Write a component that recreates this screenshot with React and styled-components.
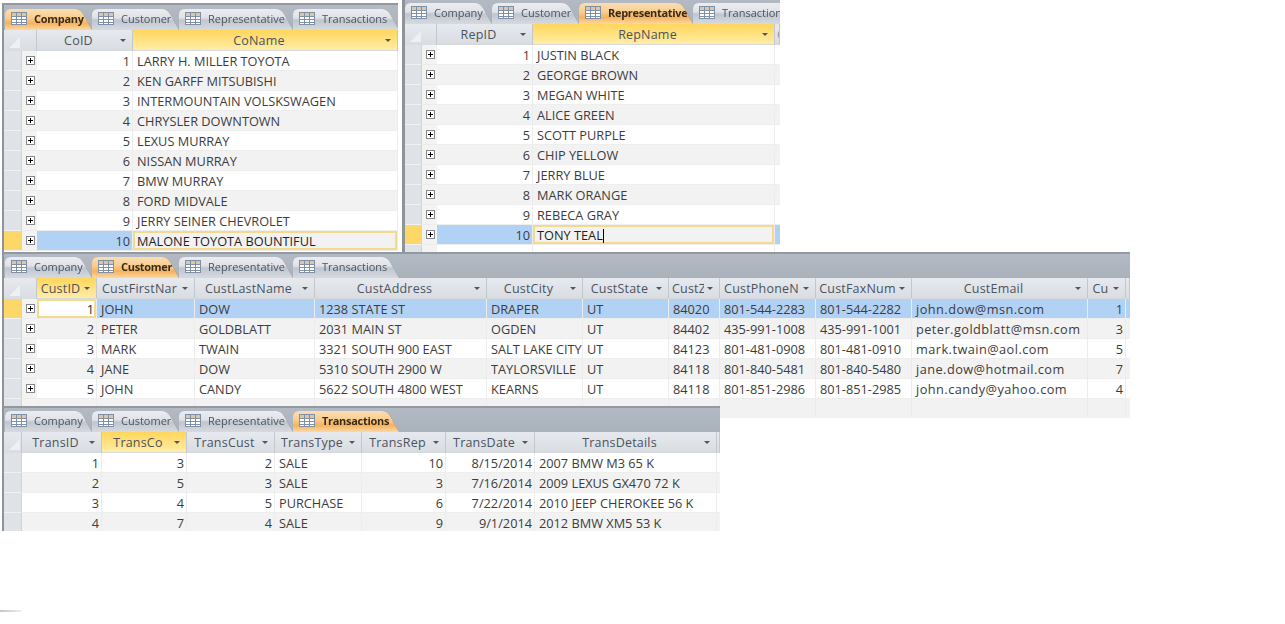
import React from "react";
import styled, { createGlobalStyle } from "styled-components";

const GlobalStyle = createGlobalStyle`
  html, body {
    margin: 0;
    padding: 0;
    background: #fff;
  }
  body {
    font-family: "Open Sans", "Liberation Sans", sans-serif;
  }
`;

const Page = styled.div`
  width: 1285px;
  height: 624px;
  overflow: hidden;
`;

const TopRow = styled.div`
  display: flex;
  align-items: flex-start;
  margin-left: 2px;
  gap: 4px;
`;

const Window = styled.section`
  position: relative;
  box-sizing: border-box;
  flex: none;
  width: ${p => p.$width}px;
  height: ${p => p.$height}px;
  margin-left: ${p => p.$left || 0}px;
  margin-top: ${p => p.$overlap || 0}px;
  padding-top: ${p => p.$gap || 0}px;
  overflow: hidden;
  background: #fff;
`;

const Frame = styled.div`
  box-sizing: border-box;
  height: 100%;
  border-left: ${p => p.$border || 2}px solid #8f949b;
  border-top: ${p => (p.$noTop ? "0" : "2px solid #94989f")};
`;

const TabStrip = styled.div`
  display: flex;
  align-items: flex-end;
  box-sizing: border-box;
  height: ${p => p.$height || 24}px;
  padding-left: ${p => p.$inset}px;
  background: linear-gradient(#b3bac4, #a9b1bb);
`;

const TabOutline = styled.div`
  flex: none;
  position: relative;
  z-index: ${p => (p.$active ? 2 : 1)};
  width: ${p => p.$width}px;
  margin-right: -1px;
  filter: drop-shadow(0 0 0.6px #6f7883);
`;

const TabShape = styled.div`
  display: flex;
  align-items: center;
  box-sizing: border-box;
  height: 22px;
  padding: 0 0 2px 6px;
  gap: 7px;
  font-size: 11px;
  white-space: nowrap;
  font-weight: ${p => (p.$active ? 700 : 400)};
  letter-spacing: ${p => (p.$active ? "-0.3px" : "0")};
  color: ${p => (p.$active ? "#3a2a14" : "#4c5560")};
  background: ${p =>
    p.$active
      ? "linear-gradient(#fbe0b8, #f9cd8e 45%, #f6b25e 70%, #fbd9a5)"
      : "linear-gradient(#eceef1, #dfe2e7 45%, #c0c6ce 55%, #d6dae0)"};
  clip-path: ${p => {
    const w = p.$width;
    return `path("M0 22 L0 6 Q0 1 6 1 L${w - 18} 1 Q${w - 13} 1 ${w - 10} 6 L${w - 1} 22 Z")`;
  }};
`;

const GridRow = styled.div`
  display: grid;
  grid-template-columns: ${p => p.$cols};
  height: ${p => p.$height || 20}px;
  background: ${p => (p.$alt ? "#f2f2f2" : "#fff")};
`;

const HeaderCell = styled.div`
  display: flex;
  align-items: center;
  min-width: 0;
  overflow: hidden;
  box-sizing: border-box;
  border-right: 1px solid #c3c8cf;
  border-bottom: 1px solid #d6d9de;
  font-size: 12.5px;
  letter-spacing: 0.2px;
  color: #4a535e;
  background: ${p =>
    p.$active
      ? "linear-gradient(#ffd65c, #ffe68f 70%, #ffeda8)"
      : "linear-gradient(#e6e9ed, #d9dde2)"};
`;

const HeaderLabel = styled.span`
  flex: 1;
  min-width: 0;
  padding-left: 3px;
  overflow: hidden;
  white-space: nowrap;
  text-align: center;
`;

const TailLabel = styled.span`
  padding-left: 2px;
  color: #8d949d;
`;

const SortArrow = styled.span`
  flex: none;
  width: 0;
  height: 0;
  margin: 1px 6px 0 3px;
  border-left: 3px solid transparent;
  border-right: 3px solid transparent;
  border-top: 3px solid #4f5761;
`;

const Corner = styled.div`
  grid-column: span ${p => p.$span};
  display: flex;
  align-items: flex-end;
  padding: 0 0 3px 5px;
  border-right: 1px solid #c3c8cf;
  background: linear-gradient(#e6e9ed, #d9dde2);
`;

const Selector = styled.div`
  box-sizing: border-box;
  border-bottom: 1px solid #f0f1f3;
  border-right: 1px solid #d0d4d9;
  background: ${p => (p.$current ? "#fdd868" : "#dfe3e8")};
`;

const ExpandCell = styled.div`
  display: flex;
  align-items: center;
  justify-content: center;
  padding-left: 1px;
  border-bottom: 1px solid #ececec;
  background: #f3f3f1;
`;

const Cell = styled.div`
  box-sizing: border-box;
  min-width: 0;
  padding: 0 ${p => (p.$right ? 2 : 3)}px 0 4px;
  overflow: hidden;
  white-space: nowrap;
  font-size: 12.75px;
  line-height: 21px;
  letter-spacing: ${p => p.$spacing || 0}px;
  text-align: ${p => (p.$right ? "right" : "left")};
  color: ${p => (p.$focus ? "#1f1f1f" : "#3c3c3c")};
  border-right: 1px solid #ececec;
  border-bottom: 1px solid #eeeeee;
  background: ${p => (p.$selected ? "#b2d2f5" : "transparent")};
  box-shadow: ${p => (p.$focus ? "inset 0 0 0 2px #f3da8c" : "none")};
`;

const Caret = styled.span`
  display: inline-block;
  width: 1px;
  height: 14px;
  vertical-align: -3px;
  background: #000;
`;

const StrayMark = styled.div`
  width: 22px;
  height: 2px;
  margin-top: 79px;
  background: linear-gradient(90deg, #c4c4c4, #f1f1f1);
`;

const TableIcon = () => (
  <svg width="16" height="13" viewBox="0 0 16 13">
    <rect x="0.5" y="0.5" width="15" height="12" fill="#fff" stroke="#7f8fa8" />
    <rect x="1" y="1" width="14" height="3" fill="#d9c8a6" />
    <path d="M0 4.5H16M0 7.5H16M0 10.5H16M5.5 0V13M10.5 0V13" stroke="#7f8fa8" fill="none" />
  </svg>
);

const PlusBox = () => (
  <svg width="9" height="9" viewBox="0 0 9 9">
    <rect x="0.5" y="0.5" width="8" height="8" fill="#fff" stroke="#85898f" />
    <path d="M2 4.5H7M4.5 2V7" stroke="#000" fill="none" />
  </svg>
);

const CornerMark = () => (
  <svg width="11" height="11" viewBox="0 0 11 11">
    <path d="M0 11L11 0V11Z" fill="#eef0f3" />
  </svg>
);

const TABS = [
  { name: "Company", width: 88 },
  { name: "Customer", width: 88 },
  { name: "Representative", width: 115 },
  { name: "Transactions", width: 107 }
];

const Tabs = ({ active, height, inset = 1 }) => (
  <TabStrip $height={height} $inset={inset}>
    {TABS.map(tab => (
      <TabOutline key={tab.name} $width={tab.width} $active={tab.name === active}>
        <TabShape $width={tab.width} $active={tab.name === active}>
          <TableIcon />
          {tab.name}
        </TabShape>
      </TabOutline>
    ))}
  </TabStrip>
);

const Datasheet = ({
  columns,
  rows,
  expander,
  current,
  focusCol,
  blankRows = 0,
  caret,
  selectorWidth = 18,
  tail
}) => {
  const leading = expander ? `${selectorWidth}px 15px` : `${selectorWidth}px`;
  const cols = `${leading} ${columns.map(c => `${c.width}px`).join(" ")} 1fr`;

  return (
    <>
      <GridRow $cols={cols} $height={21}>
        <Corner $span={expander ? 2 : 1}>
          <CornerMark />
        </Corner>
        {columns.map((c, i) => (
          <HeaderCell key={c.title} $active={i === focusCol}>
            <HeaderLabel>{c.title}</HeaderLabel>
            <SortArrow />
          </HeaderCell>
        ))}
        <HeaderCell>{tail && <TailLabel>{tail}</TailLabel>}</HeaderCell>
      </GridRow>
      {rows.map((row, r) => {
        const selected = r === current;
        return (
          <GridRow key={r} $cols={cols} $alt={r % 2 === 1}>
            <Selector $current={selected} />
            {expander && (
              <ExpandCell>
                <PlusBox />
              </ExpandCell>
            )}
            {row.map((value, c) => {
              const focus = selected && c === focusCol;
              return (
                <Cell
                  key={c}
                  $right={columns[c].right}
                  $spacing={columns[c].spacing}
                  $focus={focus}
                  $selected={selected && !focus}
                >
                  {value}
                  {focus && caret && <Caret />}
                </Cell>
              );
            })}
            <Cell $selected={selected} />
          </GridRow>
        );
      })}
      {Array.from({ length: blankRows }, (_, i) => (
        <GridRow key={i} $cols={cols} $alt={(rows.length + i) % 2 === 1}>
          <Selector />
          {expander && <ExpandCell />}
          {columns.map(c => (
            <Cell key={c.title} />
          ))}
          <Cell />
        </GridRow>
      ))}
    </>
  );
};

const companyColumns = [
  { title: "CoID", width: 96, right: true },
  { title: "CoName", width: 265 }
];

const companyRows = [
  [1, "LARRY H. MILLER TOYOTA"],
  [2, "KEN GARFF MITSUBISHI"],
  [3, "INTERMOUNTAIN VOLSKSWAGEN"],
  [4, "CHRYSLER DOWNTOWN"],
  [5, "LEXUS MURRAY"],
  [6, "NISSAN MURRAY"],
  [7, "BMW MURRAY"],
  [8, "FORD MIDVALE"],
  [9, "JERRY SEINER CHEVROLET"],
  [10, "MALONE TOYOTA BOUNTIFUL"]
];

const repColumns = [
  { title: "RepID", width: 96, right: true },
  { title: "RepName", width: 242 }
];

const repRows = [
  [1, "JUSTIN BLACK"],
  [2, "GEORGE BROWN"],
  [3, "MEGAN WHITE"],
  [4, "ALICE GREEN"],
  [5, "SCOTT PURPLE"],
  [6, "CHIP YELLOW"],
  [7, "JERRY BLUE"],
  [8, "MARK ORANGE"],
  [9, "REBECA GRAY"],
  [10, "TONY TEAL"]
];

const customerColumns = [
  { title: "CustID", width: 60, right: true },
  { title: "CustFirstNar", width: 98 },
  { title: "CustLastName", width: 120 },
  { title: "CustAddress", width: 172 },
  { title: "CustCity", width: 96 },
  { title: "CustState", width: 86 },
  { title: "CustZ", width: 51 },
  { title: "CustPhoneN", width: 96 },
  { title: "CustFaxNum", width: 96 },
  { title: "CustEmail", width: 176, spacing: 0.45 },
  { title: "Cu", width: 38, right: true }
];

const customerRows = [
  [1, "JOHN", "DOW", "1238 STATE ST", "DRAPER", "UT", "84020", "801-544-2283", "801-544-2282", "john.dow@msn.com", 1],
  [2, "PETER", "GOLDBLATT", "2031 MAIN ST", "OGDEN", "UT", "84402", "435-991-1008", "435-991-1001", "peter.goldblatt@msn.com", 3],
  [3, "MARK", "TWAIN", "3321 SOUTH 900 EAST", "SALT LAKE CITY", "UT", "84123", "801-481-0908", "801-481-0910", "mark.twain@aol.com", 5],
  [4, "JANE", "DOW", "5310 SOUTH 2900 W", "TAYLORSVILLE", "UT", "84118", "801-840-5481", "801-840-5480", "jane.dow@hotmail.com", 7],
  [5, "JOHN", "CANDY", "5622 SOUTH 4800 WEST", "KEARNS", "UT", "84118", "801-851-2986", "801-851-2985", "john.candy@yahoo.com", 4]
];

const transColumns = [
  { title: "TransID", width: 80, right: true },
  { title: "TransCo", width: 85, right: true },
  { title: "TransCust", width: 88, right: true },
  { title: "TransType", width: 87 },
  { title: "TransRep", width: 84, right: true },
  { title: "TransDate", width: 89, right: true },
  { title: "TransDetails", width: 182 }
];

const transRows = [
  [1, 3, 2, "SALE", 10, "8/15/2014", "2007 BMW M3 65 K"],
  [2, 5, 3, "SALE", 3, "7/16/2014", "2009 LEXUS GX470 72 K"],
  [3, 4, 5, "PURCHASE", 6, "7/22/2014", "2010 JEEP CHEROKEE 56 K"],
  [4, 7, 4, "SALE", 9, "9/1/2014", "2012 BMW XM5 53 K"]
];

export default function App() {
  return (
    <Page>
      <GlobalStyle />
      <TopRow>
        <Window $width={396} $height={252} $gap={3}>
          <Frame>
            <Tabs active="Company" height={25} />
            <Datasheet
              columns={companyColumns}
              rows={companyRows}
              expander
              current={9}
              focusCol={1}
            />
          </Frame>
        </Window>
        <Window $width={378} $height={252}>
          <Frame $border={3} $noTop>
            <Tabs active="Representative" inset={0} />
            <Datasheet
              columns={repColumns}
              rows={repRows}
              expander
              current={9}
              focusCol={1}
              blankRows={1}
              caret
              selectorWidth={17}
              tail="C"
            />
          </Frame>
        </Window>
      </TopRow>
      <Window $width={1128} $height={166} $left={2}>
        <Frame>
          <Tabs active="Customer" />
          <Datasheet
            columns={customerColumns}
            rows={customerRows}
            expander
            current={0}
            focusCol={0}
            blankRows={1}
          />
        </Frame>
      </Window>
      <Window $width={718} $height={125} $left={2} $overlap={-12}>
        <Frame>
          <Tabs active="Transactions" />
          <Datasheet columns={transColumns} rows={transRows} focusCol={1} />
        </Frame>
      </Window>
      <StrayMark />
    </Page>
  );
}
